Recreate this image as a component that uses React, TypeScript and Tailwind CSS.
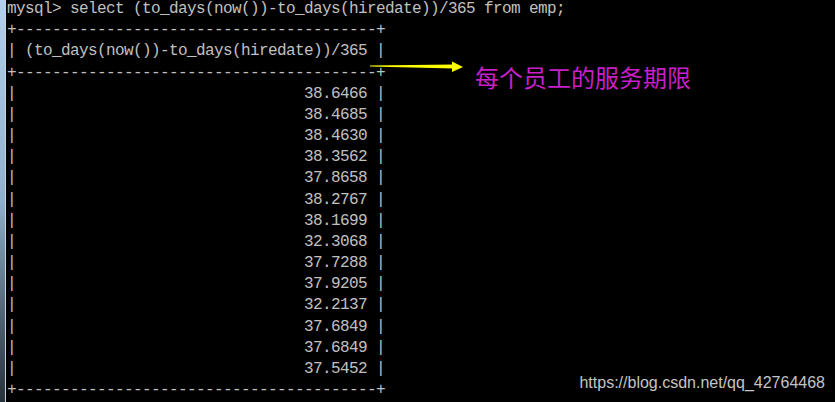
const values = [
  "38.6466",
  "38.4685",
  "38.4630",
  "38.3562",
  "37.8658",
  "38.2767",
  "38.1699",
  "32.3068",
  "37.7288",
  "37.9205",
  "32.2137",
  "37.6849",
  "37.6849",
  "37.5452",
];

const header = "(to_days(now())-to_days(hiredate))/365";
const border = "+" + "-".repeat(header.length + 2) + "+";

const mono =
  "m-0 pl-px font-['Liberation_Mono',monospace] text-[16px] leading-[21.17px] tracking-[-0.6px] text-[#c0c0c0]";

function App() {
  const table = [
    border,
    "| " + header + " |",
    border,
    ...values.map((v) => "| " + v.padStart(header.length, " ") + " |"),
    border,
  ];

  return (
    <div className="relative flex h-[402px] w-[835px] overflow-hidden bg-black">
      {/* window frame on the left */}
      <div className="w-[5px] shrink-0 bg-gradient-to-b from-[#b3d0ec] via-[#8fb0cc] to-[#27313b]" />
      <div className="w-px shrink-0 bg-[#c9d3dc]" />

      <div className="-mt-px flex flex-col">
        <pre className={mono}>{"mysql> select " + header + " from emp;"}</pre>
        <div className="flex items-start">
          <pre className={mono}>{table.join("\n")}</pre>

          {/* annotation */}
          <div className="-ml-[17px] flex items-start">
            <svg className="mt-[38px]" width="100" height="18" viewBox="0 0 100 18">
              <polygon points="2,7.5 86,6.5 86,10.5 2,8.6" fill="#ffff00" />
              <polygon points="84,3.5 95,9 84,14" fill="#ffff00" />
            </svg>
            <div className="ml-[7px] mt-[42px] whitespace-nowrap font-['Noto_Sans_CJK_SC',sans-serif] text-[24px] leading-[30px] text-[#c81fc8]">
              每个员工的服务期限
            </div>
          </div>
        </div>
      </div>

      <div className="absolute bottom-[9px] right-[10px] font-['Liberation_Sans',Arial,sans-serif] text-[16px] leading-[20px] text-[#c4c4c4]">
        https://blog.csdn.net/qq_42764468
      </div>
    </div>
  );
}

export default App;
